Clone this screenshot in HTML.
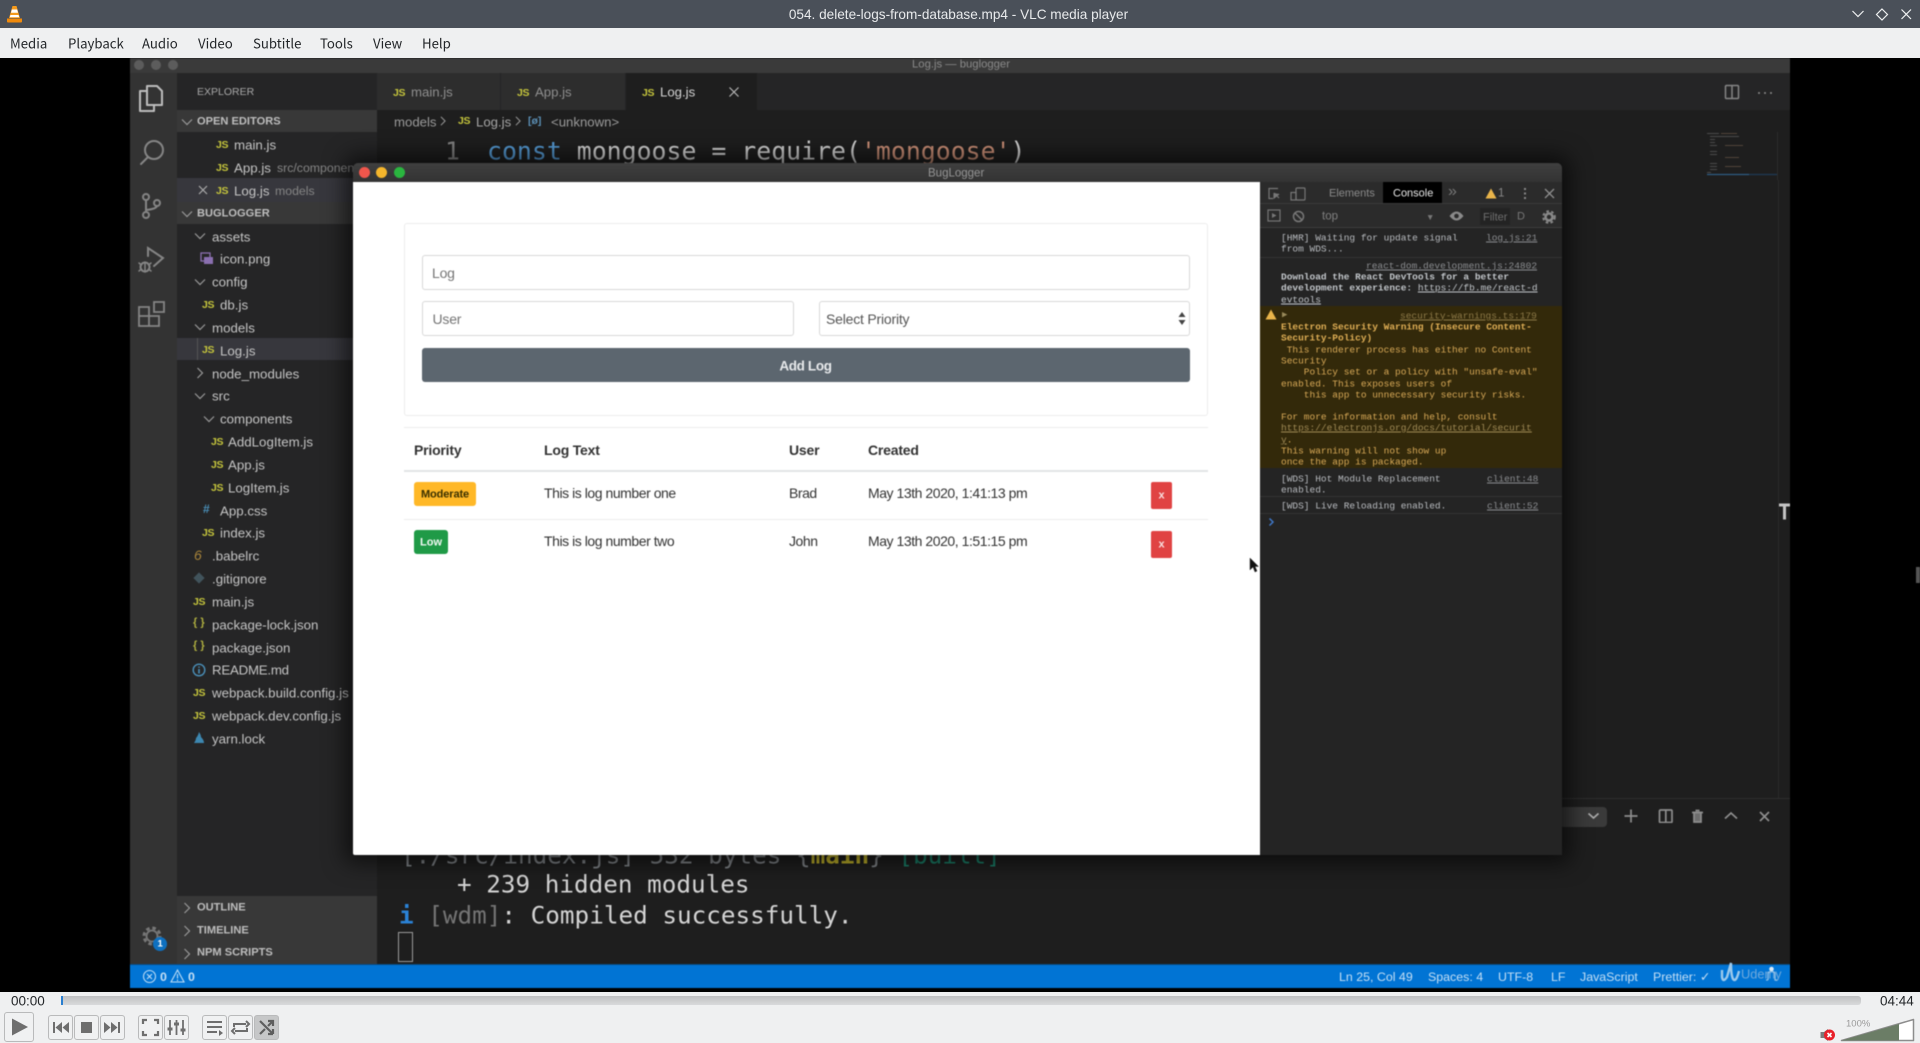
<!DOCTYPE html>
<html><head><meta charset="utf-8"><title>VLC</title>
<style>
html,body{margin:0;padding:0;width:1920px;height:1043px;overflow:hidden;background:#000;font-family:"Liberation Sans",sans-serif}
.a{position:absolute}
.t{position:absolute;white-space:pre;transform:translateY(-50%);line-height:1}
#v{position:absolute;left:0;top:58px;width:1920px;height:934px;overflow:hidden;background:#000}
#w{position:absolute;left:0;top:-58px;width:1920px;height:1043px;filter:blur(.55px)}
.tr{font-size:13.3px;color:#c4c4c4;margin-top:.7px}
.js{font-size:10.5px;font-weight:700;color:#c5c53c;letter-spacing:-.3px;margin-top:.5px}
.h{font-size:11.1px;font-weight:700;color:#bdbdbd;margin-top:1.6px}
.m{font:9.5px "Liberation Mono",monospace;color:#b9bcc0;margin-top:.7px}
.mb{font:bold 9.5px "Liberation Mono",monospace;color:#c2c6ca;margin-top:.7px}
.y{font:9.5px "Liberation Mono",monospace;color:#d8a957;margin-top:.7px}
.yb{font:bold 9.5px "Liberation Mono",monospace;color:#dfae55;margin-top:.7px}
.l{font:9.5px "Liberation Mono",monospace;color:#8b8d90;text-decoration:underline;margin-top:.7px}
.tm{font:24.3px "DejaVu Sans Mono",monospace;color:#d4d4d4}
.st{font-size:12.4px;color:#c5dff5}
.app{font-size:14px;letter-spacing:-.45px;color:#333;margin-top:.7px}
.thd{font-size:14px;font-weight:700;letter-spacing:-.2px;color:#333;margin-top:1px}
.tab{font-size:13.2px}
.b{position:absolute;top:1015px;width:23px;height:23px;border:1px solid #b9babb;border-radius:3px;background:#f0f1f2;box-sizing:content-box}
.b svg{position:absolute;left:0;top:0}
.mn{position:absolute;top:43px;font:13.2px "Noto Sans CJK JP","Liberation Sans",sans-serif;color:#232629;transform:translateY(-50%);line-height:1;white-space:pre}
</style></head><body>
<svg width="0" height="0" style="position:absolute"><defs>
<symbol id="d" viewBox="0 0 12 12"><path d="M1 3.5L6 8.5L11 3.5" fill="none" stroke="#9a9a9a" stroke-width="1.2"/></symbol>
<symbol id="r" viewBox="0 0 12 12"><path d="M3.5 1L8.5 6L3.5 11" fill="none" stroke="#9a9a9a" stroke-width="1.2"/></symbol>
</defs></svg>

<!-- VLC title -->
<div class="a" style="left:0;top:0;width:1920px;height:28px;background:#4a5059"></div>
<svg class="a" style="left:6px;top:5px" width="17" height="18" viewBox="0 0 17 18"><path d="M6.5 1H10.5L14 13H3Z" fill="#f59a1b"/><path d="M5.8 4.5H11.2L12 7.7H5Z" fill="#fff"/><path d="M4.4 10H12.6L13.2 12.2H3.8Z" fill="#fff"/><path d="M1 13.5H16V16.5Q16 17.5 15 17.5H2Q1 17.5 1 16.5Z" fill="#f08a0c"/></svg>
<div class="t" style="left:0;width:1917px;text-align:center;top:14.500px;font-size:13.600px;color:#e8eaec">054. delete-logs-from-database.mp4 - VLC media player</div>
<svg class="a" style="left:1850px;top:6px" width="66" height="17" viewBox="0 0 66 17" fill="none" stroke="#eef0f1" stroke-width="1.2"><path d="M2.500 5L8 10.500L13.500 5"/><path d="M32 3L37.500 8.500L32 14L26.500 8.500Z"/><path d="M51.500 3.500L61 13M61 3.500L51.500 13"/></svg>

<!-- Menu -->
<div class="a" style="left:0;top:28px;width:1920px;height:30px;background:#eff0f1"></div>
<div class="mn" style="left:10px">Media</div><div class="mn" style="left:68px">Playback</div><div class="mn" style="left:142px">Audio</div><div class="mn" style="left:198px">Video</div><div class="mn" style="left:253px">Subtitle</div><div class="mn" style="left:320px">Tools</div><div class="mn" style="left:373px">View</div><div class="mn" style="left:422px">Help</div>

<!-- Video -->
<div id="v"><div id="w">
<!-- VS Code shell -->
<div class="a" style="left:130px;top:58px;width:1660px;height:15px;background:#3a3a3a"></div>
<div class="a" style="left:134px;top:60px;width:10px;height:10px;border-radius:50%;background:#5c5c5c"></div>
<div class="a" style="left:151px;top:60px;width:10px;height:10px;border-radius:50%;background:#5c5c5c"></div>
<div class="a" style="left:168px;top:60px;width:10px;height:10px;border-radius:50%;background:#5c5c5c"></div>
<div class="t" style="left:912px;top:64.800px;font-size:11.300px;color:#8a8a8a">Log.js — buglogger</div>
<div class="a" style="left:130px;top:73px;width:47px;height:891px;background:#333"></div>
<div class="a" style="left:177px;top:73px;width:200px;height:891px;background:#252526"></div>
<div class="a" style="left:377px;top:73px;width:1413px;height:891px;background:#1e1e1e"></div>
<div class="a" style="left:377px;top:73px;width:1413px;height:37px;background:#252526"></div>
<div class="a" style="left:377px;top:73px;width:123px;height:37px;background:#2d2d2d"></div>
<div class="a" style="left:501px;top:73px;width:124px;height:37px;background:#2d2d2d"></div>
<div class="a" style="left:626px;top:73px;width:131px;height:37px;background:#1e1e1e"></div>

<!-- Activity icons -->
<svg class="a" style="left:130px;top:80px" width="47" height="260" viewBox="0 0 47 260"><g fill="none" stroke="#bdbdbd" stroke-width="2" stroke-linejoin="round"><path d="M17 6H27L32 11V25H17Z"/><path d="M17 11H10V31H24V25"/></g>
<g fill="none" stroke="#858585" stroke-width="2" stroke-linecap="round"><circle cx="24" cy="70" r="9"/><path d="M18 77L11 84"/><circle cx="16" cy="117" r="3"/><circle cx="16" cy="135" r="3"/><circle cx="27" cy="123" r="3"/><path d="M16 120V132M16 130Q26 129 27 126"/><path d="M18 176V168L33 178L24 186"/><circle cx="15" cy="187" r="4.500"/><path d="M9 183L11.500 185M9 191L11.500 189M21 183L18.500 185M21 191L18.500 189M15 182V192" stroke-width="1.500"/><path d="M9 227H19V236H9ZM9 236H19V246H9ZM19 236H29V246H19ZM24 222H34V232H24Z" stroke-width="1.800"/></g></svg>
<svg class="a" style="left:139px;top:923px" width="27" height="27" viewBox="0 0 27 27"><circle cx="13" cy="13" r="8" fill="none" stroke="#777" stroke-width="3" stroke-dasharray="3.500 2.800"/><circle cx="13" cy="13" r="5.500" fill="none" stroke="#777" stroke-width="1.800"/></svg>
<div class="a" style="left:153px;top:937px;width:14px;height:14px;border-radius:50%;background:#0e70c0"></div>
<div class="t" style="left:157.500px;top:944px;font-size:9.500px;font-weight:700;color:#fff">1</div>

<!-- Sidebar -->
<div class="t" style="left:197px;top:92px;font-size:10.500px;margin-top:0;color:#a8a8a8">EXPLORER</div>
<div class="a" style="left:177px;top:110px;width:200px;height:22px;background:#383838"></div>
<svg class="a" style="left:181px;top:116px" width="12" height="12"><use href="#d"/></svg>
<div class="t h" style="left:197px;top:120px">OPEN EDITORS</div>
<div class="a" style="left:177px;top:178px;width:200px;height:24px;background:#37373d"></div>
<div class="a" style="left:177px;top:202px;width:200px;height:22px;background:#383838"></div>
<div class="a" style="left:177px;top:338px;width:200px;height:22px;background:#37373d"></div>
<div class="a" style="left:197px;top:338px;width:1px;height:22px;background:#555"></div>
<div class="t js" style="left:216px;top:144px">JS</div><div class="t tr" style="left:234px;top:144.500px">main.js</div>
<div class="t js" style="left:216px;top:167px">JS</div><div class="t tr" style="left:234px;top:167.300px">App.js</div><div class="t tr" style="left:277px;top:167.300px;font-size:12.300px;color:#858585">src/components</div>
<svg class="a" style="left:197px;top:184px" width="12" height="12" viewBox="0 0 12 12"><path d="M2 2L10 10M10 2L2 10" stroke="#aaa" stroke-width="1.200"/></svg>
<div class="t js" style="left:216px;top:190px">JS</div><div class="t tr" style="left:234px;top:190.200px">Log.js</div><div class="t tr" style="left:275px;top:190.200px;font-size:12.300px;color:#858585">models</div>
<svg class="a" style="left:181px;top:208px" width="12" height="12"><use href="#d"/></svg>
<div class="t h" style="left:197px;top:212px">BUGLOGGER</div>

<svg class="a" style="left:194px;top:230px" width="12" height="12"><use href="#d"/></svg><div class="t tr" style="left:212px;top:235.900px">assets</div>
<svg class="a" style="left:200px;top:252px" width="14" height="13" viewBox="0 0 14 13"><rect x="1" y="1" width="9" height="8" fill="none" stroke="#8a6fb0" stroke-width="1.300"/><rect x="4" y="5" width="9" height="7" fill="#8a6fb0"/></svg><div class="t tr" style="left:220px;top:258.700px">icon.png</div>
<svg class="a" style="left:194px;top:276px" width="12" height="12"><use href="#d"/></svg><div class="t tr" style="left:212px;top:281.500px">config</div>
<div class="t js" style="left:202px;top:304px">JS</div><div class="t tr" style="left:220px;top:304.400px">db.js</div>
<svg class="a" style="left:194px;top:321px" width="12" height="12"><use href="#d"/></svg><div class="t tr" style="left:212px;top:327.200px">models</div>
<div class="t js" style="left:202px;top:349px">JS</div><div class="t tr" style="left:220px;top:350px">Log.js</div>
<svg class="a" style="left:194px;top:367px" width="12" height="12"><use href="#r"/></svg><div class="t tr" style="left:212px;top:372.900px">node_modules</div>
<svg class="a" style="left:194px;top:390px" width="12" height="12"><use href="#d"/></svg><div class="t tr" style="left:212px;top:395.700px">src</div>
<svg class="a" style="left:203px;top:413px" width="12" height="12"><use href="#d"/></svg><div class="t tr" style="left:220px;top:418.600px">components</div>
<div class="t js" style="left:211px;top:441px">JS</div><div class="t tr" style="left:228px;top:441.400px">AddLogItem.js</div>
<div class="t js" style="left:211px;top:464px">JS</div><div class="t tr" style="left:228px;top:464.300px">App.js</div>
<div class="t js" style="left:211px;top:487px">JS</div><div class="t tr" style="left:228px;top:487.100px">LogItem.js</div>
<div class="t" style="left:203px;top:509px;font-size:12px;font-weight:700;color:#4a8fb8">#</div><div class="t tr" style="left:220px;top:509.900px">App.css</div>
<div class="t js" style="left:202px;top:532px">JS</div><div class="t tr" style="left:220px;top:532.800px">index.js</div>
<div class="t" style="left:194px;top:555px;font-size:14px;font-style:italic;color:#a8843a">6</div><div class="t tr" style="left:212px;top:555.600px">.babelrc</div>
<div class="a" style="left:195px;top:574px;width:8px;height:8px;background:#41535b;transform:rotate(45deg)"></div><div class="t tr" style="left:212px;top:578.500px">.gitignore</div>
<div class="t js" style="left:193px;top:601px">JS</div><div class="t tr" style="left:212px;top:601.300px">main.js</div>
<div class="t" style="left:193px;top:623px;font-size:11px;font-weight:700;color:#b0b040">{ }</div><div class="t tr" style="left:212px;top:624.100px">package-lock.json</div>
<div class="t" style="left:193px;top:646px;font-size:11px;font-weight:700;color:#b0b040">{ }</div><div class="t tr" style="left:212px;top:647px">package.json</div>
<svg class="a" style="left:192px;top:663px" width="14" height="14" viewBox="0 0 14 14"><circle cx="7" cy="7" r="5.800" fill="none" stroke="#4a8fb8" stroke-width="1.400"/><path d="M7 6V10.500M7 3.500V4.800" stroke="#4a8fb8" stroke-width="1.600"/></svg><div class="t tr" style="left:212px;top:669.800px;letter-spacing:-.25px">README.md</div>
<div class="t js" style="left:193px;top:692px">JS</div><div class="t tr" style="left:212px;top:692.700px">webpack.build.config.js</div>
<div class="t js" style="left:193px;top:715px">JS</div><div class="t tr" style="left:212px;top:715.500px">webpack.dev.config.js</div>
<svg class="a" style="left:193px;top:731px" width="12" height="14" viewBox="0 0 12 14"><path d="M6 1Q8 4 8 6Q11 9 11 12H1Q3 9 3 7Q5 5 6 1Z" fill="#3d87b0"/></svg><div class="t tr" style="left:212px;top:738.300px">yarn.lock</div>

<div class="a" style="left:177px;top:896px;width:200px;height:68px;background:#383838"></div>
<svg class="a" style="left:181px;top:902px" width="12" height="12"><use href="#r"/></svg><div class="t h" style="left:197px;top:906.500px">OUTLINE</div>
<svg class="a" style="left:181px;top:925px" width="12" height="12"><use href="#r"/></svg><div class="t h" style="left:197px;top:929.500px">TIMELINE</div>
<svg class="a" style="left:181px;top:948px" width="12" height="12"><use href="#r"/></svg><div class="t h" style="left:197px;top:951.500px">NPM SCRIPTS</div>

<!-- Tabs -->
<div class="t js" style="left:393px;top:92px">JS</div><div class="t tab" style="left:411px;top:92px;color:#8f8f8f">main.js</div>
<div class="t js" style="left:517px;top:92px">JS</div><div class="t tab" style="left:535px;top:92px;color:#8f8f8f">App.js</div>
<div class="t js" style="left:642px;top:92px">JS</div><div class="t tab" style="left:660px;top:92px;color:#d4d4d4">Log.js</div>
<svg class="a" style="left:728px;top:86px" width="12" height="12" viewBox="0 0 12 12"><path d="M1.500 1.500L10.500 10.500M10.500 1.500L1.500 10.500" stroke="#b5b5b5" stroke-width="1.200"/></svg>
<svg class="a" style="left:1724px;top:84px" width="16" height="16" viewBox="0 0 16 16" fill="none" stroke="#858585" stroke-width="1.500"><rect x="1.500" y="1.500" width="13" height="13" rx="1"/><path d="M8 1.500V14.500"/></svg>
<div class="a" style="left:1758px;top:91.500px;width:2px;height:2px;border-radius:50%;background:#8a8a8a;box-shadow:6px 0 #8a8a8a,12px 0 #8a8a8a"></div>

<!-- Breadcrumb -->
<div class="t" style="left:394px;top:121.500px;font-size:13.200px;color:#9a9a9a">models</div>
<svg class="a" style="left:438px;top:116px" width="10" height="10" viewBox="0 0 12 12"><use href="#r"/></svg>
<div class="t js" style="left:458px;top:120px">JS</div><div class="t" style="left:476px;top:121.500px;font-size:13.200px;color:#a5a5a5">Log.js</div>
<svg class="a" style="left:513px;top:116px" width="10" height="10" viewBox="0 0 12 12"><use href="#r"/></svg>
<div class="t" style="left:528px;top:121px;font-size:10.500px;font-weight:700;color:#5b8fb5">[ø]</div><div class="t" style="left:551px;top:121.500px;font-size:13.200px;color:#9a9a9a">&lt;unknown&gt;</div>

<!-- Editor -->
<div class="t" style="left:445px;top:151px;font:24.800px 'DejaVu Sans Mono',monospace;color:#808080">1</div>
<div class="t" style="left:487px;top:151px;font:24.850px 'DejaVu Sans Mono',monospace;color:#d4d4d4"><span style="color:#569cd6">const</span> mongoose = require(<span style="color:#ce9178">'mongoose'</span>)</div>

<!-- Minimap -->
<svg class="a" style="left:1705px;top:130px" width="85" height="50" viewBox="0 0 85 50"><g stroke-width=".8" opacity=".55"><path d="M2 3.500H14M5 6.500H34M5 9.500H10M5 12.500H10M5 15.500H12M5 21.500H12M5 24.500H12M5 33.500H12M5 36.500H12M5 39.500H12M2 42.500H6" stroke="#8a8a8a"/><path d="M16 3.500H32M20 15.500H38M20 27.500H34M20 36.500H36" stroke="#9a7a60"/></g><path d="M2 44.500H44" stroke="#2e5b83" stroke-width="1.300"/><path d="M44 44.500H72" stroke="#1f3a55" stroke-width="1.300"/><path d="M72.500 2V50" stroke="#2b2b2b"/></svg>
<div class="a" style="left:1778px;top:180px;width:1px;height:618px;background:#2a2a2a"></div>
<div class="a" style="left:1562px;top:798px;width:228px;height:1px;background:#2e2e2e"></div>

<!-- Terminal toolbar -->
<div class="a" style="left:1560px;top:807px;width:47px;height:20px;border-radius:4px;background:#3a3a3a"></div>
<svg class="a" style="left:1586px;top:809px" width="15" height="14" viewBox="0 0 15 14" fill="none" stroke="#aaa" stroke-width="1.700"><path d="M2.500 4.500L7.500 9L12.500 4.500"/></svg>
<svg class="a" style="left:1589px;top:809px" width="200" height="14" viewBox="0 0 200 14" fill="none" stroke="#8e8e8e" stroke-width="1.700"><path d="M42 0.500V13.500M35.500 7H48.500"/><rect x="70.500" y="1" width="12.500" height="12.500" rx="1"/><path d="M76.800 1V13.500"/><path d="M103 3.500H114"/><path d="M105 3.500H112V13H105Z" fill="#6e6e6e"/><path d="M106.500 1.500H110.500"/><path d="M136 9.500L142 4L148 9.500"/><path d="M171 3L180 12M180 3L171 12"/></svg>

<!-- Terminal -->
<div class="t tm" style="left:401px;top:855px;color:#7e8286">[./src/index.js] 532 bytes {<span style="color:#c0b22a;font-weight:700">main</span>} <span style="color:#1a7f68">[built]</span></div>
<div class="t tm" style="left:457px;top:884px">+ 239 hidden modules</div>
<div class="t tm" style="left:399px;top:915px"><span style="color:#2a82d6;font-weight:700">i</span> <span style="color:#747474">[wdm]</span>: Compiled successfully.</div>
<div class="a" style="left:398px;top:932px;width:13px;height:28px;border:1.500px solid #9c9c9c"></div>

<!-- Status bar -->
<div class="a" style="left:130px;top:964px;width:1660px;height:24px;background:#0174d4"></div>
<div class="a" style="left:130px;top:964px;width:1660px;height:1px;background:#0b4a80"></div>
<svg class="a" style="left:142px;top:969px" width="15" height="15" viewBox="0 0 15 15" fill="none" stroke="#bcdcf6" stroke-width="1.100"><circle cx="7.500" cy="7.500" r="6"/><path d="M5 5L10 10M10 5L5 10"/></svg>
<div class="t st" style="left:160px;top:976.500px;font-weight:700">0</div>
<svg class="a" style="left:170px;top:969px" width="15" height="14" viewBox="0 0 15 14" fill="none" stroke="#bcdcf6" stroke-width="1.100"><path d="M7.500 1L14 13H1Z"/><path d="M7.500 5V9.500M7.500 10.500V12"/></svg>
<div class="t st" style="left:188px;top:976.500px;font-weight:700">0</div>
<div class="t st" style="left:1339px;top:976.500px">Ln 25, Col 49</div>
<div class="t st" style="left:1428px;top:976.500px">Spaces: 4</div>
<div class="t st" style="left:1498px;top:976.500px">UTF-8</div>
<div class="t st" style="left:1551px;top:976.500px">LF</div>
<div class="t st" style="left:1580px;top:976.500px">JavaScript</div>
<div class="t st" style="left:1653px;top:976.500px">Prettier: ✓</div>
<svg class="a" style="left:1718px;top:961px" width="26" height="25" viewBox="0 0 26 25" fill="none" stroke="#9cc9ec" stroke-width="2.400"><path d="M4 9V16Q5 22 9 16L13 2Q13 14 15 18Q18 22 21 10"/></svg>
<div class="t" style="left:1741px;top:975px;font-size:12.800px;color:#6fa9dc">Udemy</div>
<svg class="a" style="left:1765px;top:966px" width="13" height="17" viewBox="0 0 13 17"><circle cx="6.500" cy="3" r="2.300" fill="#dbeaf7"/><path d="M3 14V8Q3 5.500 6.500 5.500Q10 5.500 10 8V14H12M3 14H1" fill="none" stroke="#8fc0e8" stroke-width="1.300"/></svg>

<!-- BugLogger window -->
<div class="a" style="left:352.500px;top:163px;width:1209.500px;height:692px;border-radius:5px 5px 2px 2px;background:#242424;box-shadow:0 0 22px 8px rgba(0,0,0,.6);overflow:hidden">
 <div class="a" style="left:0;top:0;width:1209.500px;height:19px;background:linear-gradient(#3f3f3f,#333)"></div>
 <div class="a" style="left:0;top:19px;width:907.500px;height:673px;background:#fff"></div>
</div>
<div class="a" style="left:359px;top:167px;width:11px;height:11px;border-radius:50%;background:#f0564c"></div>
<div class="a" style="left:376px;top:167px;width:11px;height:11px;border-radius:50%;background:#f5b62c"></div>
<div class="a" style="left:394px;top:167px;width:11px;height:11px;border-radius:50%;background:#2ab63f"></div>
<div class="t" style="left:928px;top:173.800px;font-size:11.500px;color:#959595">BugLogger</div>

<!-- Form -->
<div class="a" style="left:404px;top:223px;width:802px;height:191px;border:1px solid #ececec;border-radius:3px"></div>
<div class="a" style="left:422px;top:255px;width:766px;height:33px;border:1px solid #d8d8d8;border-radius:3px"></div>
<div class="t" style="left:432px;top:273px;font-size:14px;letter-spacing:-.2px;color:#757575">Log</div>
<div class="a" style="left:422px;top:301px;width:370px;height:33px;border:1px solid #d8d8d8;border-radius:3px"></div>
<div class="t" style="left:432.500px;top:319px;font-size:14px;letter-spacing:-.2px;color:#757575">User</div>
<div class="a" style="left:819px;top:301px;width:369px;height:33px;border:1px solid #d8d8d8;border-radius:3px"></div>
<div class="t" style="left:826px;top:319px;font-size:14px;letter-spacing:-.2px;color:#555">Select Priority</div>
<svg class="a" style="left:1178px;top:311px" width="8" height="15" viewBox="0 0 8 15"><path d="M4 1L7.500 6H0.500ZM4 14L0.500 9H7.500Z" fill="#444"/></svg>
<div class="a" style="left:422px;top:348px;width:767.500px;height:34px;border-radius:3px;background:#5c666f"></div>
<div class="t" style="left:422px;width:767px;text-align:center;top:366px;font-size:13.500px;font-weight:700;letter-spacing:-.35px;color:#e8eaec">Add Log</div>

<!-- Table -->
<div class="a" style="left:404px;top:427px;width:804px;height:1px;background:#ececec"></div>
<div class="t thd" style="left:414px;top:449px">Priority</div>
<div class="t thd" style="left:544px;top:449px">Log Text</div>
<div class="t thd" style="left:789px;top:449px">User</div>
<div class="t thd" style="left:868px;top:449px">Created</div>
<div class="a" style="left:404px;top:470px;width:804px;height:2px;background:#e2e4e6"></div>
<div class="a" style="left:414px;top:482px;width:62px;height:24px;border-radius:3px;background:#ffb827"></div>
<div class="t" style="left:414px;width:62px;text-align:center;top:494.500px;font-size:11px;font-weight:700;letter-spacing:-.1px;color:#3a3000">Moderate</div>
<div class="t app" style="left:544px;top:492.500px">This is log number one</div>
<div class="t app" style="left:789px;top:492.500px">Brad</div>
<div class="t app" style="left:868px;top:492.500px">May 13th 2020, 1:41:13 pm</div>
<div class="a" style="left:1151px;top:482px;width:21px;height:27px;border-radius:2px;background:#e04343"></div>
<div class="t" style="left:1151px;width:21px;text-align:center;top:496px;font-size:11px;font-weight:700;color:#f8dede">x</div>
<div class="a" style="left:404px;top:519px;width:804px;height:1px;background:#ececec"></div>
<div class="a" style="left:414px;top:530px;width:34px;height:24px;border-radius:3px;background:#1f9a47"></div>
<div class="t" style="left:414px;width:34px;text-align:center;top:542.500px;font-size:11px;font-weight:700;color:#f0f8f2">Low</div>
<div class="t app" style="left:544px;top:540.500px">This is log number two</div>
<div class="t app" style="left:789px;top:540.500px">John</div>
<div class="t app" style="left:868px;top:540.500px">May 13th 2020, 1:51:15 pm</div>
<div class="a" style="left:1151px;top:530.500px;width:21px;height:27px;border-radius:2px;background:#e04343"></div>
<div class="t" style="left:1151px;width:21px;text-align:center;top:544.500px;font-size:11px;font-weight:700;color:#f8dede">x</div>

<!-- Devtools -->
<div class="a" style="left:1260px;top:182px;width:302px;height:21px;background:#2b2b2b"></div>
<div class="a" style="left:1260px;top:203px;width:302px;height:25px;background:#2b2b2b;border-top:1px solid #3a3a3a;box-sizing:border-box"></div>
<div class="a" style="left:1260px;top:227px;width:302px;height:1px;background:#3d3d3d"></div>
<div class="a" style="left:1383px;top:182px;width:59px;height:21px;background:#000"></div>
<div class="t" style="left:1329px;top:193.500px;font-size:11px;color:#8a8a8a">Elements</div>
<div class="t" style="left:1393px;top:193.500px;font-size:11px;color:#e8e8e8">Console</div>
<svg class="a" style="left:1267px;top:187px" width="46" height="14" viewBox="0 0 46 14"><g fill="none" stroke="#777" stroke-width="1.200"><path d="M11 1.500H2V11.500H6"/><path d="M7 6L12 11M7 6V11L12 7" fill="#777"/><rect x="29" y="1" width="9" height="12" rx="1"/><rect x="24" y="5.500" width="5" height="7.500"/></g></svg>
<div class="t" style="left:1448px;top:192px;font-size:16px;color:#777">»</div>
<svg class="a" style="left:1485px;top:188px" width="12" height="11" viewBox="0 0 12 11"><path d="M6 0.500L11.500 10.500H0.500Z" fill="#e9b44a"/></svg>
<div class="t" style="left:1498px;top:194px;font-size:11.500px;color:#888">1</div>
<div class="a" style="left:1524px;top:188px;width:2px;height:2px;background:#888;box-shadow:0 4.500px #888,0 9px #888"></div>
<svg class="a" style="left:1544px;top:188px" width="11" height="11" viewBox="0 0 11 11"><path d="M1 1L10 10M10 1L1 10" stroke="#8e8e8e" stroke-width="1.300"/></svg>
<svg class="a" style="left:1267px;top:209px" width="15" height="14" viewBox="0 0 15 14"><rect x="1" y="1" width="12" height="11" fill="none" stroke="#777" stroke-width="1.200"/><path d="M5 4L9.500 6.500L5 9Z" fill="#777"/></svg>
<svg class="a" style="left:1292px;top:210px" width="13" height="13" viewBox="0 0 13 13" fill="none" stroke="#777" stroke-width="1.500"><circle cx="6.500" cy="6.500" r="5"/><path d="M3 3L10 10"/></svg>
<div class="t" style="left:1322px;top:217px;font-size:11.500px;color:#808080">top</div>
<div class="t" style="left:1426px;top:217px;font-size:8.500px;color:#777">▼</div>
<svg class="a" style="left:1449px;top:210px" width="15" height="12" viewBox="0 0 15 12"><path d="M0.500 6Q7.500 -3 14.500 6Q7.500 15 0.500 6Z" fill="#8a8a8a"/><circle cx="7.500" cy="6" r="2.300" fill="#2b2b2b"/></svg>
<div class="a" style="left:1480px;top:208px;width:30px;height:17px;background:#232323"></div>
<div class="t" style="left:1483px;top:217.500px;font-size:11px;color:#6e6e6e">Filter</div>
<div class="t" style="left:1517px;top:216.500px;font-size:11px;color:#777">D</div>
<svg class="a" style="left:1542px;top:210px" width="14" height="14" viewBox="0 0 14 14" fill="none" stroke="#888"><circle cx="7" cy="7" r="3.500" stroke-width="2.600"/><circle cx="7" cy="7" r="5.800" stroke-width="2" stroke-dasharray="2.600 2.300"/></svg>

<div class="a" style="left:1260px;top:228px;width:302px;height:627px;background:#242424"></div>
<div class="a" style="left:1260px;top:257px;width:302px;height:1px;background:#333"></div>
<div class="a" style="left:1260px;top:306px;width:302px;height:162px;background:#33290a"></div>
<div class="a" style="left:1260px;top:496px;width:302px;height:1px;background:#333"></div>
<div class="a" style="left:1260px;top:513px;width:302px;height:1px;background:#333"></div>

<div class="t m" style="left:1281px;top:237px">[HMR] Waiting for update signal</div><div class="t l" style="left:1486px;top:237px">log.js:21</div>
<div class="t m" style="left:1281px;top:248px">from WDS...</div>
<div class="t l" style="left:1366px;top:265px">react-dom.development.js:24802</div>
<div class="t mb" style="left:1281px;top:276px">Download the React DevTools for a better</div>
<div class="t mb" style="left:1281px;top:287px">development experience: <span style="font-weight:400;text-decoration:underline">https://fb.me/react-d</span></div>
<div class="t mb" style="left:1281px;top:299px;font-weight:400;text-decoration:underline">evtools</div>
<svg class="a" style="left:1265px;top:309px" width="12" height="11" viewBox="0 0 12 11"><path d="M6 0.500L11.500 10.500H0.500Z" fill="#e9b44a"/></svg>
<div class="t" style="left:1282px;top:315px;font-size:7px;color:#998a5a">▶</div>
<div class="t l" style="left:1400px;top:315px;color:#8e7a48">security-warnings.ts:179</div>
<div class="t yb" style="left:1281px;top:326px">Electron Security Warning (Insecure Content-</div>
<div class="t yb" style="left:1281px;top:337px">Security-Policy)</div>
<div class="t y" style="left:1281px;top:349px"> This renderer process has either no Content</div>
<div class="t y" style="left:1281px;top:360px">Security</div>
<div class="t y" style="left:1281px;top:371px">    Policy set or a policy with "unsafe-eval"</div>
<div class="t y" style="left:1281px;top:383px">enabled. This exposes users of</div>
<div class="t y" style="left:1281px;top:394px">    this app to unnecessary security risks.</div>
<div class="t y" style="left:1281px;top:416px">For more information and help, consult</div>
<div class="t y" style="left:1281px;top:427px;color:#a08a55;text-decoration:underline">https://electronjs.org/docs/tutorial/securit</div>
<div class="t y" style="left:1281px;top:439px"><span style="color:#a08a55;text-decoration:underline">y</span>.</div>
<div class="t y" style="left:1281px;top:450px">This warning will not show up</div>
<div class="t y" style="left:1281px;top:461px">once the app is packaged.</div>
<div class="t m" style="left:1281px;top:478px">[WDS] Hot Module Replacement</div><div class="t l" style="left:1487px;top:478px">client:48</div>
<div class="t m" style="left:1281px;top:489px">enabled.</div>
<div class="t m" style="left:1281px;top:505px">[WDS] Live Reloading enabled.</div><div class="t l" style="left:1487px;top:505px">client:52</div>
<svg class="a" style="left:1268px;top:517px" width="7" height="10" viewBox="0 0 7 10"><path d="M1.500 1.500L5 5L1.500 8.500" fill="none" stroke="#3f78c8" stroke-width="1.500"/></svg>

<!-- Cursors in video -->
<svg class="a" style="left:1249px;top:557px" width="10" height="16" viewBox="0 0 10 16"><path d="M1 1V13L4 10L6 15L8 14L6 9.500H9.500Z" fill="#111" stroke="#333" stroke-width=".5"/></svg>
<svg class="a" style="left:1778px;top:503px" width="13" height="18" viewBox="0 0 13 18"><path d="M1 2H12M6.500 2V16.500" stroke="#c4c4c4" stroke-width="3" fill="none"/></svg>
<div class="a" style="left:1916px;top:567px;width:4px;height:16px;background:#555"></div>
</div></div>

<!-- Controls -->
<div class="a" style="left:0;top:992px;width:1920px;height:51px;background:#eff0f1"></div>
<div class="t" style="left:11px;top:1001px;font-size:13.500px;color:#232629">00:00</div>
<div class="t" style="left:1880px;top:1001px;font-size:13.500px;color:#232629">04:44</div>
<div class="a" style="left:61px;top:996px;width:1800px;height:9px;border-radius:3px;background:linear-gradient(#bfc0c2,#d9dadb)"></div>
<div class="a" style="left:61px;top:996px;width:2px;height:9px;background:#2a7fd0"></div>

<div class="a" style="left:4px;top:1012px;width:28px;height:28px;border:1px solid #b9babb;border-radius:3px;background:#f0f1f2"></div>
<svg class="a" style="left:4px;top:1012px" width="30" height="30" viewBox="0 0 30 30"><path d="M8 6.500L24 15L8 23.500Z" fill="#6e6e6e"/></svg>
<div class="b" style="left:48px"><svg width="23" height="23" viewBox="0 0 23 23"><path d="M4 6H6V17H4ZM13 6V17L6.500 11.500ZM20 6V17L13.500 11.500Z" fill="#6e6e6e"/></svg></div>
<div class="b" style="left:74px"><svg width="23" height="23" viewBox="0 0 23 23"><rect x="6" y="6" width="11" height="11" fill="#6e6e6e"/></svg></div>
<div class="b" style="left:100px"><svg width="23" height="23" viewBox="0 0 23 23"><path d="M3 6V17L9.500 11.500ZM10 6V17L16.500 11.500ZM17 6H19V17H17Z" fill="#6e6e6e"/></svg></div>
<div class="b" style="left:138px"><svg width="23" height="23" viewBox="0 0 23 23"><path d="M4 8V4H8M15 4H19V8M19 15V19H15M8 19H4V15" fill="none" stroke="#6e6e6e" stroke-width="2.200"/></svg></div>
<div class="b" style="left:164px"><svg width="23" height="23" viewBox="0 0 23 23"><path d="M5 4V19M11.500 4V19M18 4V19" stroke="#6e6e6e" stroke-width="1.800"/><path d="M3 12H7V14H3ZM9.500 7H13.500V9H9.500ZM16 13H20V15H16Z" fill="#6e6e6e" stroke="#6e6e6e"/></svg></div>
<div class="b" style="left:202px"><svg width="23" height="23" viewBox="0 0 23 23"><path d="M4 6H19M4 11H19M4 16H14" stroke="#6e6e6e" stroke-width="2"/><path d="M16 14L20 17L16 20Z" fill="#6e6e6e"/></svg></div>
<div class="b" style="left:228px"><svg width="23" height="23" viewBox="0 0 23 23"><path d="M5 11V8H17M17 5L20 8L17 11M18 12V15H6M6 12L3 15L6 18" fill="none" stroke="#6e6e6e" stroke-width="2"/></svg></div>
<div class="b" style="left:254px;background:#c6c7c8"><svg width="23" height="23" viewBox="0 0 23 23"><path d="M5 5L18 18M18 18V13M18 18H13M13 5H18V10M18 5L13 10M5 18L10 13" fill="none" stroke="#5e5e5e" stroke-width="2.200"/></svg></div>

<!-- Volume -->
<svg class="a" style="left:1820px;top:1027px" width="16" height="16" viewBox="0 0 16 16"><path d="M0.500 5H4L8 2V14L4 11H0.500Z" fill="#7a7a7a"/><circle cx="9.500" cy="8" r="5.500" fill="#e8202a"/><path d="M7.500 6L11.500 10M11.500 6L7.500 10" stroke="#fff" stroke-width="1.600"/></svg>
<svg class="a" style="left:1840px;top:1018px" width="76" height="24" viewBox="0 0 76 24"><path d="M1.500 22.500L73.500 1.500V22.500Z" fill="#fff" stroke="#8d8d8d" stroke-width="1.500" stroke-linejoin="round"/><path d="M1.500 22.500L59 6V22.500Z" fill="#6b7d66"/></svg>
<div class="t" style="left:1846px;top:1024px;font-size:9.500px;color:#9a9a9a">100%</div>
</body></html>
